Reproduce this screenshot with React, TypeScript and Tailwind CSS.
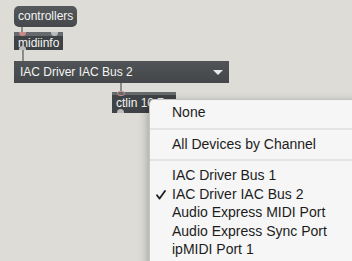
import React from 'react';

const menuItems = [
  { label: 'IAC Driver Bus 1' },
  { label: 'IAC Driver IAC Bus 2', checked: true },
  { label: 'Audio Express MIDI Port' },
  { label: 'Audio Express Sync Port' },
  { label: 'ipMIDI Port 1' },
];

// small port nubs on Max objects
const Port: React.FC<{ className: string }> = ({ className }) => (
  <div className={`absolute w-[7px] h-[4px] ${className}`} />
);

const Check: React.FC = () => (
  <svg width="10" height="10" viewBox="0 0 10 10" className="absolute left-[6px] top-[5px]">
    <path d="M1 5.2 L3.6 8.6 L9 1" fill="none" stroke="#1f1f1f" strokeWidth="1.8" strokeLinecap="round" strokeLinejoin="round" />
  </svg>
);

export default function App() {
  return (
    <div className="relative w-[352px] h-[261px] overflow-hidden bg-[#dddcd6] font-['Liberation_Sans',Arial,sans-serif] text-[12px] text-[#f4f4f4]">
      {/* patch cords */}
      <div className="absolute left-[21px] top-[27px] w-[2px] h-[6px] bg-[#8a8c8c]" />
      <div className="absolute left-[22px] top-[50px] w-[2px] h-[11px] bg-[#8a8c8c]" />
      <div className="absolute left-[120px] top-[83px] w-[2px] h-[10px] bg-[#8a8c8c]" />

      {/* controllers message */}
      <div className="absolute left-[14px] top-[6px] w-[63px] h-[21px] rounded-[5px] bg-gradient-to-b from-[#55595b] to-[#45494b] leading-[21px] pl-[4px]">
        controllers
      </div>

      {/* midiinfo object */}
      <div className="absolute left-[14px] top-[32px] w-[49px] h-[18px] bg-[#3f4345] border-t-[4px] border-[#676a6c] leading-[14px] pl-[4px]">
        midiinfo
        <Port className="left-[5px] -top-[4px] rounded-b-full bg-[#c98a8a]" />
        <Port className="left-[37px] -top-[4px] rounded-b-full bg-[#b9bbbc]" />
        <Port className="left-[5px] bottom-0 rounded-t-full bg-[#b9bbbc]" />
      </div>

      {/* umenu */}
      <div className="absolute left-[14px] top-[61px] w-[215px] h-[22px] bg-gradient-to-b from-[#505456] to-[#43474a] flex items-center justify-between pl-[6px] pr-[6px]">
        <span>IAC Driver IAC Bus 2</span>
        <svg width="10" height="5" viewBox="0 0 10 5">
          <path d="M0 0 H10 L5 5 Z" fill="#e8e8e8" />
        </svg>
      </div>

      {/* ctlin object */}
      <div className="absolute left-[112px] top-[92px] w-[64px] h-[21px] bg-[#3f4345] border-t-[3px] border-[#676a6c] leading-[16px] pl-[4px]">
        ctlin 10 7
        <div className="absolute left-[5px] -top-[4px] w-[8px] h-[5px] rounded-full border-[1.5px] border-[#c98a8a]" />
        <Port className="left-[5px] bottom-0 rounded-t-full bg-[#b9bbbc]" />
      </div>

      {/* popup menu */}
      <div className="absolute left-[149px] top-[99px] w-[215px] h-[175px] rounded-tl-[5px] bg-[#f6f6f6] border-l border-t border-[#c4c4c4] shadow-[-2px_2px_8px_rgba(0,0,0,0.25)] pt-[3px] text-[14px] text-[#1c1c1c] flex flex-col">
        <div className="h-[19px] leading-[19px] pl-[22px]">None</div>
        <div className="mt-[6px] mb-[5px] h-[2px] bg-[#e4e4e4]" />
        <div className="h-[19px] leading-[19px] pl-[22px]">All Devices by Channel</div>
        <div className="mt-[5px] mb-[5px] h-[2px] bg-[#e4e4e4]" />
        {menuItems.map((item) => (
          <div key={item.label} className="relative h-[18.5px] leading-[19px] pl-[22px]">
            {item.checked && <Check />}
            {item.label}
          </div>
        ))}
      </div>
    </div>
  );
}
